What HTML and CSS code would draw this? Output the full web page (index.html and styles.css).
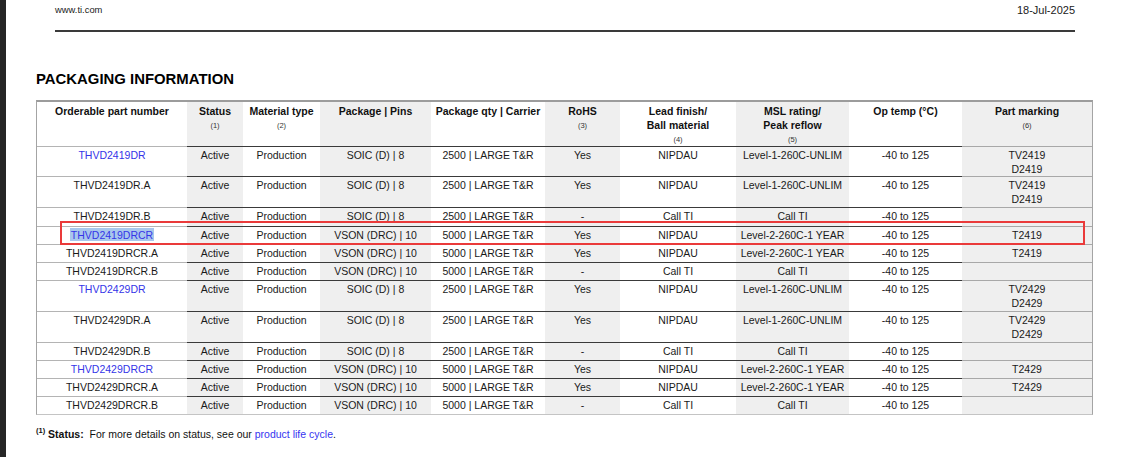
FILE: index.html
```html
<!DOCTYPE html>
<html lang="en">
<head>
<meta charset="utf-8">
<title>Packaging information</title>
<link rel="stylesheet" href="styles.css">
</head>
<body>
<div class="viewer">
  <div class="edge"></div>
  <div class="page">
    <header class="running-head">
      <span class="site">www.ti.com</span>
      <span class="date">18-Jul-2025</span>
    </header>
    <h1 class="title">PACKAGING INFORMATION</h1>
    <div class="table-wrap">
      <table class="pkg">
        <colgroup>
          <col class="c1">
          <col class="c2 shade">
          <col class="c3">
          <col class="c4 shade">
          <col class="c5">
          <col class="c6 shade">
          <col class="c7">
          <col class="c8 shade">
          <col class="c9">
          <col class="c10 shade">
        </colgroup>
        <thead>
          <tr class="head">
            <th>Orderable part number</th>
            <th>Status<span class="fn">(1)</span></th>
            <th>Material type<span class="fn">(2)</span></th>
            <th>Package | Pins</th>
            <th>Package qty | Carrier</th>
            <th>RoHS<span class="fn">(3)</span></th>
            <th>Lead finish/<br>Ball material<span class="fn">(4)</span></th>
            <th>MSL rating/<br>Peak reflow<span class="fn">(5)</span></th>
            <th>Op temp (°C)</th>
            <th>Part marking<span class="fn">(6)</span></th>
          </tr>
        </thead>
        <tbody>
          <tr class="first">
            <td><a class="part-link" href="#">THVD2419DR</a></td>
            <td>Active</td><td>Production</td><td>SOIC (D) | 8</td><td>2500 | LARGE T&amp;R</td>
            <td>Yes</td><td>NIPDAU</td><td>Level-1-260C-UNLIM</td><td>-40 to 125</td>
            <td>TV2419<br>D2419</td>
          </tr>
          <tr class="tall">
            <td>THVD2419DR.A</td>
            <td>Active</td><td>Production</td><td>SOIC (D) | 8</td><td>2500 | LARGE T&amp;R</td>
            <td>Yes</td><td>NIPDAU</td><td>Level-1-260C-UNLIM</td><td>-40 to 125</td>
            <td>TV2419<br>D2419</td>
          </tr>
          <tr class="mid">
            <td>THVD2419DR.B</td>
            <td>Active</td><td>Production</td><td>SOIC (D) | 8</td><td>2500 | LARGE T&amp;R</td>
            <td>-</td><td>Call TI</td><td>Call TI</td><td>-40 to 125</td>
            <td></td>
          </tr>
          <tr class="single">
            <td><a class="part-link selected" href="#">THVD2419DRCR</a></td>
            <td>Active</td><td>Production</td><td>VSON (DRC) | 10</td><td>5000 | LARGE T&amp;R</td>
            <td>Yes</td><td>NIPDAU</td><td>Level-2-260C-1 YEAR</td><td>-40 to 125</td>
            <td>T2419</td>
          </tr>
          <tr class="single">
            <td>THVD2419DRCR.A</td>
            <td>Active</td><td>Production</td><td>VSON (DRC) | 10</td><td>5000 | LARGE T&amp;R</td>
            <td>Yes</td><td>NIPDAU</td><td>Level-2-260C-1 YEAR</td><td>-40 to 125</td>
            <td>T2419</td>
          </tr>
          <tr class="single">
            <td>THVD2419DRCR.B</td>
            <td>Active</td><td>Production</td><td>VSON (DRC) | 10</td><td>5000 | LARGE T&amp;R</td>
            <td>-</td><td>Call TI</td><td>Call TI</td><td>-40 to 125</td>
            <td></td>
          </tr>
          <tr class="tall">
            <td><a class="part-link" href="#">THVD2429DR</a></td>
            <td>Active</td><td>Production</td><td>SOIC (D) | 8</td><td>2500 | LARGE T&amp;R</td>
            <td>Yes</td><td>NIPDAU</td><td>Level-1-260C-UNLIM</td><td>-40 to 125</td>
            <td>TV2429<br>D2429</td>
          </tr>
          <tr class="tall">
            <td>THVD2429DR.A</td>
            <td>Active</td><td>Production</td><td>SOIC (D) | 8</td><td>2500 | LARGE T&amp;R</td>
            <td>Yes</td><td>NIPDAU</td><td>Level-1-260C-UNLIM</td><td>-40 to 125</td>
            <td>TV2429<br>D2429</td>
          </tr>
          <tr class="single">
            <td>THVD2429DR.B</td>
            <td>Active</td><td>Production</td><td>SOIC (D) | 8</td><td>2500 | LARGE T&amp;R</td>
            <td>-</td><td>Call TI</td><td>Call TI</td><td>-40 to 125</td>
            <td></td>
          </tr>
          <tr class="single">
            <td><a class="part-link" href="#">THVD2429DRCR</a></td>
            <td>Active</td><td>Production</td><td>VSON (DRC) | 10</td><td>5000 | LARGE T&amp;R</td>
            <td>Yes</td><td>NIPDAU</td><td>Level-2-260C-1 YEAR</td><td>-40 to 125</td>
            <td>T2429</td>
          </tr>
          <tr class="single">
            <td>THVD2429DRCR.A</td>
            <td>Active</td><td>Production</td><td>VSON (DRC) | 10</td><td>5000 | LARGE T&amp;R</td>
            <td>Yes</td><td>NIPDAU</td><td>Level-2-260C-1 YEAR</td><td>-40 to 125</td>
            <td>T2429</td>
          </tr>
          <tr class="single">
            <td>THVD2429DRCR.B</td>
            <td>Active</td><td>Production</td><td>VSON (DRC) | 10</td><td>5000 | LARGE T&amp;R</td>
            <td>-</td><td>Call TI</td><td>Call TI</td><td>-40 to 125</td>
            <td></td>
          </tr>
        </tbody>
      </table>
      <div class="callout"></div>
    </div>
    <p class="note"><sup class="note-mark">(1)</sup> <b class="note-label">Status:</b> For more details on status, see our <a class="note-link" href="#">product life cycle</a>.</p>
  </div>
</div>
</body>
</html>
```

FILE: styles.css
```css
html, body {
  margin: 0;
  padding: 0;
  background: #ffffff;
}

body {
  font-family: "Liberation Sans", Arial, sans-serif;
  color: #111111;
}

.viewer {
  display: flex;
  min-height: 457px;
}

.edge {
  flex: none;
  width: 6px;
  background: #262626;
}

.page {
  flex: 1;
  padding-left: 30px;
}

.running-head {
  display: flex;
  justify-content: space-between;
  align-items: flex-start;
  width: 1020px;
  height: 26px;
  margin-left: 19px;
  padding-top: 4px;
  border-bottom: 2px solid #3a3a3a;
  line-height: 12px;
  color: #1a1a1a;
}

.site {
  font-size: 9.4px;
}

.date {
  font-size: 11px;
}

.title {
  margin: 39px 0 13px;
  font-size: 14.9px;
  line-height: 16px;
  font-weight: bold;
  color: #000000;
}

.table-wrap {
  position: relative;
  width: 1057px;
}

.pkg {
  width: 1057px;
  table-layout: fixed;
  border-collapse: separate;
  border-spacing: 0;
  border-top: 2px solid #9c9c9c;
  border-left: 1px solid #a4a4a4;
  border-right: 1px solid #a4a4a4;
  border-bottom: 1px solid #c4c4c4;
  font-size: 10.5px;
  line-height: 14px;
  color: #1a1a1a;
}

.c1 { width: 150px; }
.c2 { width: 56px; }
.c3 { width: 77px; }
.c4 { width: 111px; }
.c5 { width: 114px; }
.c6 { width: 75px; }
.c7 { width: 116px; }
.c8 { width: 113px; }
.c9 { width: 113px; }
.c10 { width: 130px; }

.shade {
  background: #efefef;
}

.pkg th {
  padding: 2px 2px 0;
  vertical-align: top;
  text-align: center;
  font-weight: bold;
  color: #111111;
  white-space: nowrap;
}

.head {
  height: 44px;
}

.fn {
  display: block;
  margin-top: 2px;
  font-size: 7.5px;
  line-height: 12px;
  font-weight: normal;
  color: #333333;
}

.pkg td {
  padding: 1px 2px 0;
  vertical-align: top;
  text-align: center;
  white-space: nowrap;
  overflow: hidden;
  border-top: 1px solid #3a3a3a;
}

.pkg td:first-child {
  border-top-color: #b4b4b4;
}

.pkg td:last-child {
  border-top-color: #a8a8a8;
}

.first { height: 30px; }
.tall { height: 31px; }
.mid { height: 19px; }
.single { height: 18px; }

.part-link {
  color: #3535e8;
  text-decoration: none;
}

.selected {
  background: #a9c7ec;
  padding: 1px 1px 0;
}

.callout {
  position: absolute;
  left: 24px;
  top: 121px;
  width: 1025px;
  height: 24px;
  box-sizing: border-box;
  border: 2px solid #ea3a3a;
  pointer-events: none;
}

.note {
  margin: 12px 0 0;
  font-size: 10.5px;
  line-height: 14px;
  color: #111111;
}

.note-mark {
  vertical-align: top;
  font-size: 7.5px;
  line-height: 8px;
  font-weight: bold;
}

.note-label {
  margin-right: 3px;
}

.note-link {
  color: #3535f0;
  text-decoration: none;
}
```
